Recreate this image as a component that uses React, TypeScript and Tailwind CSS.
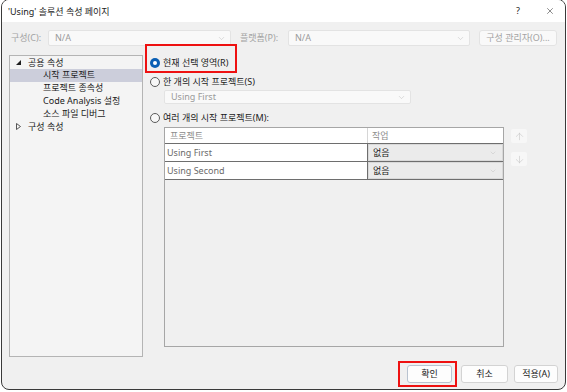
import { ChevronDown, X, ArrowUp, ArrowDown } from 'lucide-react';

const font = { fontFamily: '"Noto Sans", "Noto Sans CJK KR", sans-serif' };

function Radio({ checked }: { checked?: boolean }) {
  if (checked) {
    return (
      <span className="w-[10px] h-[10px] rounded-full bg-[#0a5fb4] flex items-center justify-center shrink-0">
        <span className="w-[4px] h-[4px] rounded-full bg-white" />
      </span>
    );
  }
  return <span className="w-[10px] h-[10px] rounded-full border border-[#5a5a5a] bg-[#f7f7f7] shrink-0" />;
}

function Combo({ text, className }: { text: string; className: string }) {
  return (
    <div className={`flex items-center justify-between bg-[#f9f9f9] border border-[#e3e3e3] rounded-[2px] pl-[6px] pr-[4px] text-[#9a9a9a] ${className}`}>
      <span>{text}</span>
      <ChevronDown size={9} strokeWidth={1} className="text-[#a8a8a8]" />
    </div>
  );
}

const tree = [
  { label: '공용 속성', level: 0, icon: 'open' },
  { label: '시작 프로젝트', level: 1, selected: true },
  { label: '프로젝트 종속성', level: 1 },
  { label: 'Code Analysis 설정', level: 1 },
  { label: '소스 파일 디버그', level: 1 },
  { label: '구성 속성', level: 0, icon: 'closed' },
];

const rows = [
  { name: 'Using First', action: '없음' },
  { name: 'Using Second', action: '없음' },
];

export default function App() {
  return (
    <div className="w-[567px] h-[392px] bg-white overflow-hidden text-[9px] text-[#1b1b1b]" style={font}>
      <div className="ml-[1px] -mt-[1px] w-[565px] h-[391px] border border-[#3a3a3a] rounded-[8px] bg-[#f0f0f0] flex flex-col overflow-hidden">
        {/* Title bar */}
        <div className="h-[22px] bg-white flex items-center pl-[6px] shrink-0">
          <span className="flex-1 pt-[1px]">'Using' 솔루션 속성 페이지</span>
          <span className="w-[10px] text-center">?</span>
          <span className="w-[32px] flex justify-end">
            <X size={10} strokeWidth={1.2} />
          </span>
          <span className="w-[10px]" />
        </div>

        {/* Configuration row */}
        <div className="mt-[8px] h-[16px] flex items-center pl-[9px] text-[#a3a3a3] shrink-0">
          <span className="w-[37px]">구성(C):</span>
          <Combo text="N/A" className="w-[183px] h-[16px]" />
          <span className="ml-[9px] w-[48px]">플랫폼(P):</span>
          <Combo text="N/A" className="w-[182px] h-[16px]" />
          <div className="ml-[9px] w-[78px] h-[16px] flex items-center justify-center bg-[#f9f9f9] border border-[#e3e3e3] rounded-[3px]">
            구성 관리자(O)...
          </div>
        </div>

        {/* Main */}
        <div className="mt-[9px] flex h-[302px] shrink-0">
          {/* Tree */}
          <div className="ml-[7px] w-[134px] h-[302px] border border-[#b4b4b4] bg-[#f4f4f4] shrink-0">
            {tree.map((t) => (
              <div
                key={t.label}
                className={`h-[12.8px] flex items-center ${t.selected ? 'bg-[#cccedb]' : ''}`}
              >
                <span className="w-[11px] flex justify-end">
                  {t.icon === 'open' && (
                    <svg width="5" height="5" viewBox="0 0 5 5">
                      <polygon points="5,0 5,5 0,5" fill="#1e1e1e" />
                    </svg>
                  )}
                  {t.icon === 'closed' && (
                    <svg width="5" height="7" viewBox="0 0 5 7">
                      <polygon points="0.5,0.5 4.5,3.5 0.5,6.5" fill="none" stroke="#444" strokeWidth="0.9" />
                    </svg>
                  )}
                </span>
                <span className={t.level === 1 ? 'pl-[22px]' : 'pl-[7px]'}>{t.label}</span>
              </div>
            ))}
          </div>

          {/* Right panel */}
          <div className="relative flex-1 pl-[7px] pt-[1px]">
            <div className="absolute left-[2px] -top-[11px] w-[92px] h-[29px] border-2 border-[#ee1111]" />
            <div className="h-[14px] flex items-center gap-[3px]">
              <Radio checked />
              <span>현재 선택 영역(R)</span>
            </div>
            <div className="mt-[5px] h-[14px] flex items-center gap-[3px]">
              <Radio />
              <span>한 개의 시작 프로젝트(S)</span>
            </div>
            <Combo text="Using First" className="mt-[1px] ml-[14px] w-[247px] h-[14px]" />
            <div className="mt-[7px] h-[14px] flex items-center gap-[3px]">
              <Radio />
              <span>여러 개의 시작 프로젝트(M):</span>
            </div>

            <div className="mt-[2px] ml-[14px] flex gap-[7px]">
              {/* Grid */}
              <div className="w-[340px] h-[220px] border border-[#a6a6a6] bg-[#f0f0f0] flex flex-col">
                <div className="h-[16px] flex bg-white border-b border-[#6e6e6e] text-[#8c8c8c]">
                  <span className="w-[203px] pl-[5px] flex items-center border-r border-[#d6d6d6]">프로젝트</span>
                  <span className="flex-1 pl-[4px] flex items-center">작업</span>
                </div>
                {rows.map((r) => (
                  <div key={r.name} className="h-[18px] flex border-b border-[#6e6e6e]">
                    <span className="w-[203px] pl-[2px] flex items-center bg-white text-[#6a6a6a] border-r border-[#6e6e6e]">
                      {r.name}
                    </span>
                    <span className="flex-1 flex items-center justify-between pl-[4px] pr-[5px] bg-[#ebebeb] border border-[#d9d9d9]">
                      <span>{r.action}</span>
                      <ChevronDown size={8} strokeWidth={1} className="text-[#b0b0b0]" />
                    </span>
                  </div>
                ))}
              </div>

              {/* Up / down */}
              <div className="flex flex-col pt-[2px] gap-[9px]">
                <div className="w-[16px] h-[14px] rounded-[2px] bg-[#f7f7f7] flex items-center justify-center">
                  <ArrowUp size={11} strokeWidth={1.1} className="text-[#bdbdbd]" />
                </div>
                <div className="w-[16px] h-[14px] rounded-[2px] bg-[#f7f7f7] flex items-center justify-center">
                  <ArrowDown size={11} strokeWidth={1.1} className="text-[#bdbdbd]" />
                </div>
              </div>
            </div>
          </div>
        </div>

        {/* Buttons */}
        <div className="mt-[8px] h-[18px] flex justify-end pr-[7px] shrink-0">
          <div className="relative">
            <div className="absolute -left-[9px] -top-[4px] w-[59px] h-[26px] border-2 border-[#ee1111]" />
            <div className="w-[45px] h-[18px] flex items-center justify-center bg-[#fdfdfd] border border-[#b9c3d0] rounded-[3px]">
              확인
            </div>
          </div>
          <div className="ml-[9px] w-[47px] h-[18px] flex items-center justify-center bg-[#fdfdfd] border border-[#d3d3d3] rounded-[3px]">
            취소
          </div>
          <div className="ml-[6px] w-[44px] h-[18px] flex items-center justify-center bg-[#fdfdfd] border border-[#d3d3d3] rounded-[3px]">
            적용(A)
          </div>
        </div>
      </div>
    </div>
  );
}
